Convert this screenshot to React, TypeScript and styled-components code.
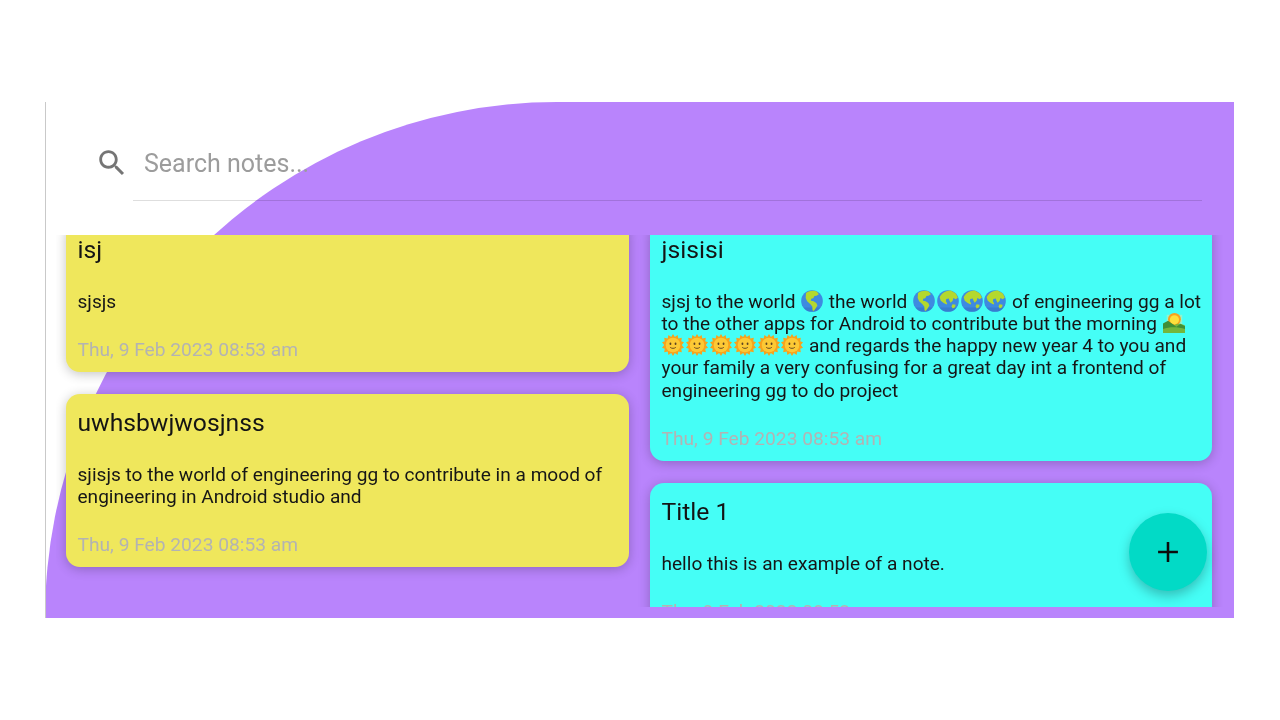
import React from 'react';
import styled, { createGlobalStyle } from 'styled-components';

const GlobalStyle = createGlobalStyle`
  html, body {
    margin: 0;
    padding: 0;
    background: #fff;
    font-family: Roboto, "Liberation Sans", sans-serif;
  }
`;

const Page = styled.div`
  width: 1280px;
  height: 720px;
  padding: 102px 0 0 45px;
  box-sizing: border-box;
  overflow: hidden;
`;

const Screen = styled.div`
  position: relative;
  width: 1189px;
  height: 516px;
  box-sizing: border-box;
  border-left: 1px solid #c9c9c9;
  overflow: hidden;
  filter: blur(0.35px);
`;

const Blob = styled.div`
  position: absolute;
  inset: 0 0 0 -1px;
  background: #b984fc;
  border-top-left-radius: 512px 516px;
`;

const SearchBar = styled.div`
  position: relative;
  height: 133px;
  box-sizing: border-box;
  padding: 0 32px 0 87px;
`;

const SearchRow = styled.div`
  display: flex;
  align-items: center;
  height: 99px;
  box-sizing: border-box;
  padding-top: 26px;
  border-bottom: 1px solid rgba(0, 0, 0, 0.13);
`;

const SearchIcon = styled.svg`
  width: 34px;
  height: 34px;
  margin-left: -38px;
  margin-right: 15px;
  margin-top: -2px;
  fill: #757575;
  flex: none;
`;

const SearchText = styled.span`
  font-size: 25px;
  color: #9c9c9c;
  margin-top: -1px;
`;

const NoteArea = styled.div`
  position: relative;
  height: 372px;
  margin: 0 11px 0 10px;
  overflow: hidden;
`;

const Columns = styled.div`
  display: grid;
  grid-template-columns: 563px 562px;
  column-gap: 21px;
  margin: -14px 0 0 10px;
`;

const Column = styled.div`
  display: flex;
  flex-direction: column;
  gap: 22px;
`;

const Card = styled.div<{ $tone: 'yellow' | 'cyan' }>`
  background: ${({ $tone }) => ($tone === 'yellow' ? '#efe75c' : '#45fef6')};
  border-radius: 14px;
  padding: 14px 8px 9.25px 11.5px;
  box-shadow: 0 2px 12px rgba(0, 0, 0, 0.24);
`;

const Title = styled.div`
  font-size: 24.7px;
  line-height: 29px;
  color: #141414;
`;

const Body = styled.div`
  margin-top: 26.5px;
  font-size: 19.08px;
  line-height: 22.25px;
  color: #161616;
`;

const DateLine = styled.div`
  margin-top: 24px;
  font-size: 19.2px;
  line-height: 26px;
  color: #b3b3b3;
`;

const EmojiSvg = styled.svg`
  display: inline-block;
  width: 22px;
  height: 22px;
  margin: -6px 0.9px;
  vertical-align: 2px;
`;

const Fab = styled.div`
  position: absolute;
  left: 1083px;
  top: 411px;
  width: 78px;
  height: 78px;
  border-radius: 50%;
  background: #02dac6;
  box-shadow: 0 5px 12px rgba(0, 0, 0, 0.25);
  display: flex;
  align-items: center;
  justify-content: center;
`;

const PlusIcon = styled.svg`
  width: 34px;
  height: 34px;
  fill: #0c0c0c;
`;

const Globe = ({ kind }: { kind: 'americas' | 'asia' }) => (
  <EmojiSvg viewBox="0 0 24 24">
    <circle cx="12" cy="12" r="11.8" fill="#3e8ae0" />
    <path d="M2.500 19a11.800 11.800 0 0 0 19 0z" fill="#2f6fc0" opacity="0.5" />
    {kind === 'americas' ? (
      <path
        fill="#b4d82e"
        d="M5.500 3.200C8.500.8 13.500-.1 17.200 1.500l2.300 3-2.600 1.700-2.200.3-1.300 2.400-2.300.6-.3 2.300 3 .5 2.900 1.900 1.200 2.600-1.800 3-2.200 3-1.300-.6-.3-4.200-2.300-2.600-3.300-3-1.600-3.700z"
      />
    ) : (
      <path
        fill="#b4d82e"
        d="M3.600 6.500C6 2.500 10.500.1 15 .5l5.300 3 2.500 4.800-2.300 1.700-2.600-1.200-.8 3-2.200 2-1.400-2.300-.6-2.300-2.800.6-.4 2.600 1.400 2.300-.8 1-3.400-1.800-2.800-2.200-1.200-3.700zM17 15.600l3.300.5-.6 2.700-2.500 1.400-1.400-2.200z"
      />
    )}
  </EmojiSvg>
);

const SunFace = () => (
  <EmojiSvg viewBox="0 0 24 24">
    <path
      fill="#f8a21c"
      d="M12 0l2 3.400L17 1l.8 3.800 3.800-.6-.6 3.800L24 9l-2.400 3 2.400 3-3 1 .6 3.800-3.800-.6L17 23l-3-2.400L12 24l-2-3.400L7 23l-.8-3.800-3.800.6.6-3.800L0 15l2.400-3L0 9l3-1-.6-3.800 3.800.6L7 1l3 2.400z"
    />
    <circle cx="12" cy="12" r="8" fill="#fcc935" />
    <ellipse cx="9.200" cy="10.600" rx="1" ry="1.300" fill="#5d4320" />
    <ellipse cx="14.800" cy="10.600" rx="1" ry="1.300" fill="#5d4320" />
    <path d="M9 14.600c1.600 1.400 4.400 1.400 6 0" fill="none" stroke="#5d4320" strokeWidth="1" />
  </EmojiSvg>
);

const Sunrise = () => (
  <EmojiSvg viewBox="0 0 24 24">
    <path fill="#cfe9b0" d="M4 3h17v11H4z" opacity="0.55" />
    <circle cx="12.500" cy="8" r="7" fill="#f7a11f" />
    <circle cx="12.500" cy="8.500" r="5" fill="#fde03c" />
    <path fill="#7fb53a" d="M0 15c5-3.600 8-3.200 12.500-.8 3.400-2 7-2 11.500.6V23H0z" />
    <path fill="#3f8f38" d="M0 12.600 5.500 9.500l9 6.500 4.500-3 5 2.500V23H0z" />
    <path fill="#8cc63f" d="M0 18.500c7-2.400 16-2.400 24 0V23H0z" opacity="0.7" />
  </EmojiSvg>
);

export default function App() {
  return (
    <Page>
      <GlobalStyle />
      <Screen>
        <Blob />
        <SearchBar>
          <SearchRow>
            <SearchIcon viewBox="0 0 24 24">
              <path d="M15.500 14h-.79l-.28-.27C15.410 12.590 16 11.110 16 9.500 16 5.910 13.090 3 9.500 3S3 5.910 3 9.500 5.910 16 9.500 16c1.610 0 3.090-.59 4.230-1.570l.27.28v.79l5 4.990L20.490 19l-4.990-5zm-6 0C7.010 14 5 11.990 5 9.500S7.010 5 9.500 5 14 7.010 14 9.500 11.990 14 9.500 14z" />
            </SearchIcon>
            <SearchText>Search notes...</SearchText>
          </SearchRow>
        </SearchBar>
        <NoteArea>
          <Columns>
            <Column>
              <Card $tone="yellow">
                <Title>isj</Title>
                <Body>sjsjs</Body>
                <DateLine>Thu, 9 Feb 2023 08:53 am</DateLine>
              </Card>
              <Card $tone="yellow">
                <Title>uwhsbwjwosjnss</Title>
                <Body>
                  sjisjs to the world of engineering gg to contribute in a mood of engineering in
                  Android studio and
                </Body>
                <DateLine>Thu, 9 Feb 2023 08:53 am</DateLine>
              </Card>
            </Column>
            <Column>
              <Card $tone="cyan">
                <Title>jsisisi</Title>
                <Body>
                  sjsj to the world <Globe kind="americas" /> the world <Globe kind="americas" />
                  <Globe kind="asia" />
                  <Globe kind="asia" />
                  <Globe kind="asia" /> of engineering gg a lot to the other apps for Android to
                  contribute but the morning <Sunrise /> <SunFace />
                  <SunFace />
                  <SunFace />
                  <SunFace />
                  <SunFace />
                  <SunFace /> and regards the happy new year 4 to you and your family a very
                  confusing for a great day int a frontend of engineering gg to do project
                </Body>
                <DateLine>Thu, 9 Feb 2023 08:53 am</DateLine>
              </Card>
              <Card $tone="cyan">
                <Title>Title 1</Title>
                <Body>hello this is an example of a note.</Body>
                <DateLine>Thu, 9 Feb 2023 08:53 am</DateLine>
              </Card>
            </Column>
          </Columns>
        </NoteArea>
        <Fab>
          <PlusIcon viewBox="0 0 24 24">
            <path d="M19 12.900h-6.100V19h-1.800v-6.100H5v-1.800h6.100V5h1.800v6.100H19z" />
          </PlusIcon>
        </Fab>
      </Screen>
    </Page>
  );
}
